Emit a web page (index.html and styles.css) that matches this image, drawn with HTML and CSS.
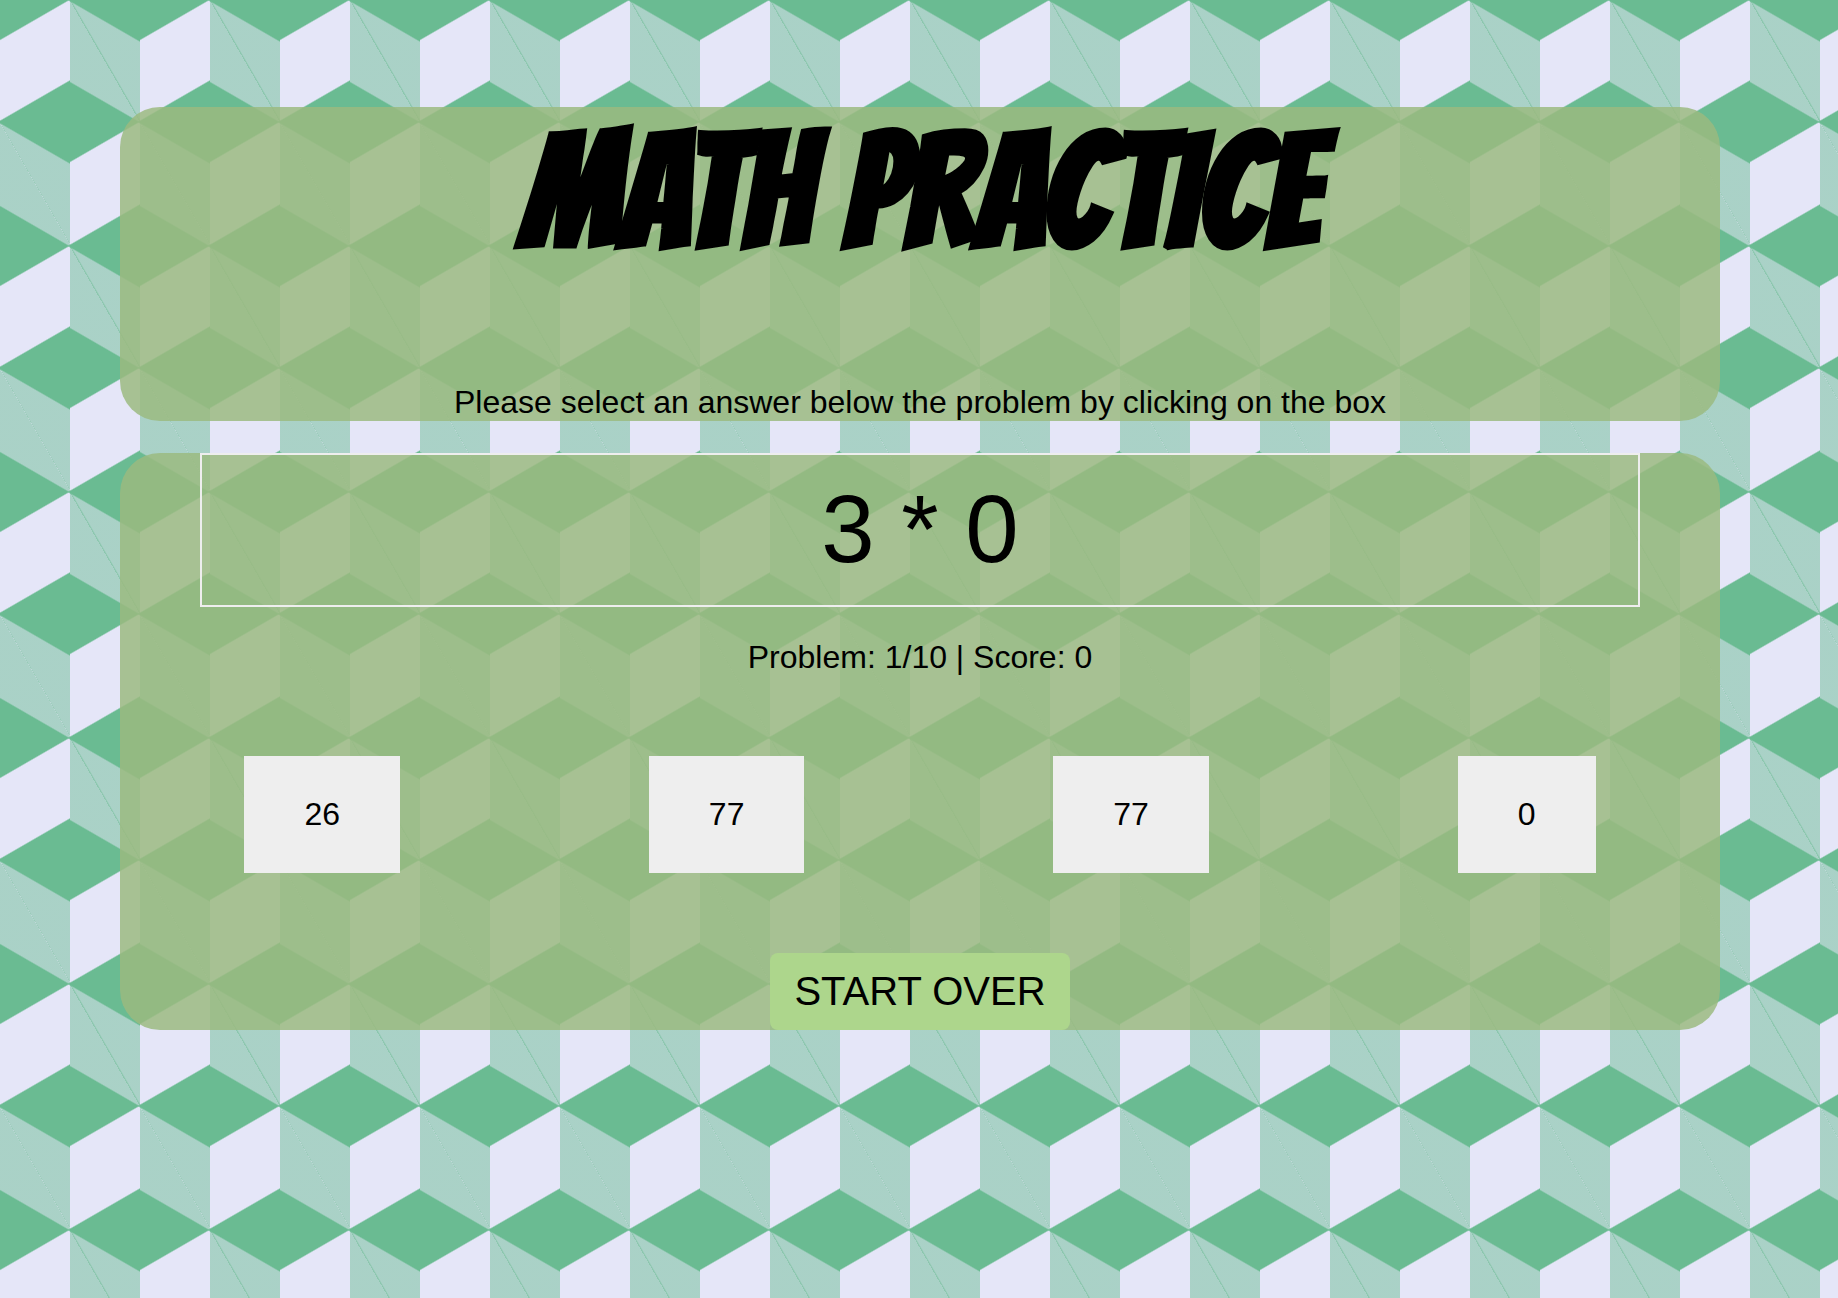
FILE: index.html
```html
<!DOCTYPE html>
<html lang="en">
<head>
<meta charset="utf-8">
<meta name="viewport" content="width=device-width, initial-scale=1">
<title>Math Practice</title>
<link rel="stylesheet" href="styles.css">
</head>
<body>
<main class="page">
  <header class="panel intro">
    <h1 class="title">MATH PRACTICE</h1>
    <p class="hint">Please select an answer below the problem by clicking on the box</p>
  </header>
  <section class="panel game">
    <p class="problem">3 * 0</p>
    <p class="status">Problem: 1/10 | Score: 0</p>
    <div class="answers">
      <button class="answer" type="button">26</button>
      <button class="answer" type="button">77</button>
      <button class="answer" type="button">77</button>
      <button class="answer" type="button">0</button>
    </div>
    <button class="restart" type="button">START OVER</button>
  </section>
</main>
</body>
</html>
```
FILE: styles.css
```css
* {
  box-sizing: border-box;
}

body {
  --top: #6abb92;
  --side: rgba(106, 187, 146, 0.48);
  margin: 0;
  min-height: 100vh;
  color: #000;
  font-family: "Liberation Sans", Arial, sans-serif;
  font-size: 32px;
  line-height: 37px;
  /* tumbling cubes */
  background-color: #e5e6f8;
  background-image:
    linear-gradient(30deg, var(--top) 12%, transparent 12.5%, transparent 87%, var(--top) 87.5%),
    linear-gradient(150deg, var(--top) 12%, transparent 12.5%, transparent 87%, var(--top) 87.5%),
    linear-gradient(30deg, var(--top) 12%, transparent 12.5%, transparent 87%, var(--top) 87.5%),
    linear-gradient(150deg, var(--top) 12%, transparent 12.5%, transparent 87%, var(--top) 87.5%),
    linear-gradient(60deg, var(--side) 25%, transparent 25.5%, transparent 75%, var(--side) 75%),
    linear-gradient(60deg, var(--side) 25%, transparent 25.5%, transparent 75%, var(--side) 75%);
  background-size: 140px 246px;
  background-position: 0 0, 0 0, 70px 122px, 70px 122px, 0 0, 70px 122px;
}

.page {
  display: flex;
  flex-direction: column;
  gap: 32px;
  padding: 107px 118px 32px 120px;
}

.panel {
  display: flex;
  flex-direction: column;
  align-items: center;
  border-radius: 40px;
  background: rgba(155, 186, 127, 0.84);
}

.title {
  margin: 0 0 107px;
  font-family: Bangers, "Liberation Sans Narrow", "Liberation Sans", sans-serif;
  font-size: 160px;
  font-weight: 700;
  line-height: 170px;
  text-align: center;
}

.hint,
.problem,
.status {
  margin: 0;
  text-align: center;
}

.problem {
  align-self: stretch;
  margin: 0 80px;
  padding: 20px 0 22px;
  border: 2px solid #eee;
  font-size: 96px;
  line-height: 108px;
}

.status {
  margin-top: 32px;
}

.answers {
  display: flex;
  align-self: stretch;
  justify-content: space-around;
  margin: 80px 0;
}

.answer,
.restart {
  border: 0;
  color: inherit;
  font: inherit;
}

.answer {
  padding: 40px 60px;
  background: #eee;
}

.restart {
  padding: 16px 24px;
  border-radius: 8px;
  background: #add68c;
  font-size: 40px;
  line-height: 45px;
}
```
